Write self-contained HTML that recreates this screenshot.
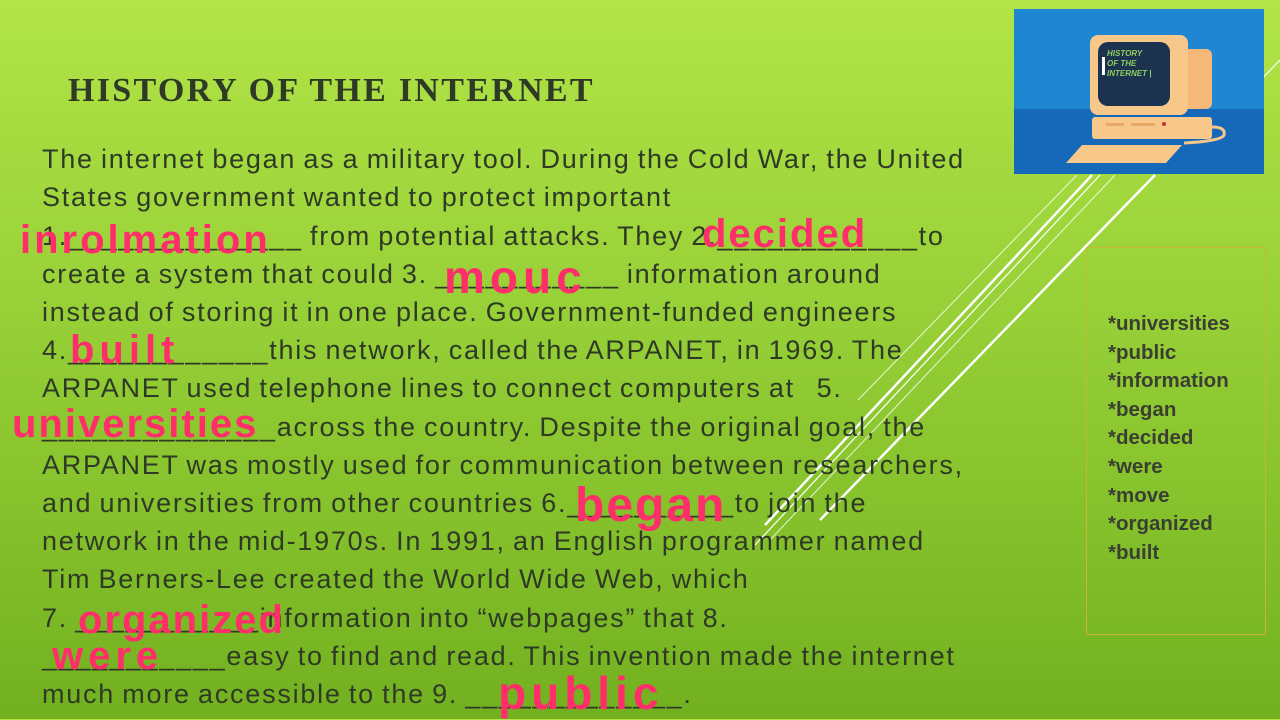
<!DOCTYPE html>
<html><head><meta charset="utf-8"><style>
*{margin:0;padding:0}
body{width:1280px;height:719px;overflow:hidden;position:relative;font-family:"Liberation Sans",sans-serif;
background:linear-gradient(180deg,#b2e446 0%,#9cd43a 35%,#86c22c 70%,#72b020 100%);}
.t{position:absolute;left:42px;font-size:27px;color:#2f3a26;white-space:nowrap;letter-spacing:1.75px;word-spacing:-2px}
.h{position:absolute;left:68px;top:72px;font-family:"Liberation Serif",serif;font-weight:bold;font-size:34px;color:#2f3a26;letter-spacing:2.3px}
.p{position:absolute;color:#ff2d6a;font-size:40px;font-family:"Liberation Sans",sans-serif;white-space:nowrap;letter-spacing:5px;font-weight:bold}
.box{position:absolute;left:1086px;top:247px;width:178px;height:386px;border:1px solid #c8b830}
.box div{font-weight:bold;color:#3a3f32;font-size:20.5px;line-height:28.6px;padding-left:21px}
</style></head><body>
<svg style="position:absolute;left:0;top:0" width="1280" height="719">
<g stroke="#fff" fill="none">
<line x1="1077" y1="175" x2="858" y2="400" stroke-width="1" opacity=".8"/>
<line x1="1092" y1="175" x2="765" y2="525" stroke-width="2.5"/>
<line x1="1100" y1="175" x2="755" y2="545" stroke-width="1.2"/>
<line x1="1115" y1="175" x2="770" y2="540" stroke-width="1" opacity=".8"/>
<line x1="1155" y1="175" x2="820" y2="520" stroke-width="2.5"/>
<line x1="1280" y1="60" x2="1230" y2="112" stroke-width="1.5" opacity=".8"/>
</g></svg>
<div style="position:absolute;left:1014px;top:9px;width:250px;height:165px;background:#1f86d2">
<div style="position:absolute;left:0;top:100px;width:250px;height:65px;background:#1569b8"></div>
<svg width="250" height="165" style="position:absolute;left:0;top:0">
<rect x="150" y="40" width="48" height="60" rx="6" fill="#f5b878"/>
<rect x="76" y="26" width="98" height="80" rx="8" fill="#f8c88a"/>
<rect x="84" y="33" width="72" height="64" rx="10" fill="#1c3350"/>
<rect x="88" y="48" width="3" height="18" fill="#fff"/>
<text x="93" y="47" font-size="8" font-style="italic" font-weight="bold" fill="#8fce5c" font-family="Liberation Sans">HISTORY</text>
<text x="93" y="57" font-size="8" font-style="italic" font-weight="bold" fill="#8fce5c" font-family="Liberation Sans">OF THE</text>
<text x="93" y="67" font-size="8" font-style="italic" font-weight="bold" fill="#8fce5c" font-family="Liberation Sans">INTERNET |</text>
<rect x="78" y="108" width="120" height="22" rx="3" fill="#f8c88a"/>
<rect x="92" y="114" width="18" height="3" fill="#e8a868"/><rect x="117" y="114" width="24" height="3" fill="#e8a868"/>
<circle cx="150" cy="115" r="2" fill="#d03030"/>
<path d="M198 118 Q212 118 210 126 Q208 132 170 134" stroke="#f8c88a" stroke-width="3" fill="none"/>
<polygon points="52,154 68,136 168,136 152,154" fill="#f8c88a"/>
</svg></div>
<div class="h">HISTORY OF THE INTERNET</div>
<div class="t" style="top:144px">The internet began as a military tool. During the Cold War, the United</div>
<div class="t" style="top:182px">States government wanted to protect important</div>
<div class="t" style="top:221px">1.______________ from potential attacks. They 2.____________to</div>
<div class="t" style="top:259px">create a system that could 3. ___________ information around</div>
<div class="t" style="top:297px">instead of storing it in one place. Government-funded engineers</div>
<div class="t" style="top:335px">4.____________this network, called the ARPANET, in 1969. The</div>
<div class="t" style="top:373px">ARPANET used telephone lines to connect computers at &nbsp;&nbsp;5.</div>
<div class="t" style="top:412px">______________across the country. Despite the original goal, the</div>
<div class="t" style="top:450px">ARPANET was mostly used for communication between researchers,</div>
<div class="t" style="top:488px">and universities from other countries 6.__________to join the</div>
<div class="t" style="top:526px">network in the mid-1970s. In 1991, an English programmer named</div>
<div class="t" style="top:564px">Tim Berners-Lee created the World Wide Web, which</div>
<div class="t" style="top:603px">7. ___________information into “webpages” that 8.</div>
<div class="t" style="top:641px">___________easy to find and read. This invention made the internet</div>
<div class="t" style="top:679px">much more accessible to the 9. _____________.</div>
<div class="p" style="left:20px;top:218px;letter-spacing:3px">inrolmation</div>
<div class="p" style="left:702px;top:212px;letter-spacing:2px">decided</div>
<div class="p" style="left:444px;top:250px;font-size:46px">mouc</div>
<div class="p" style="left:70px;top:328px">built</div>
<div class="p" style="left:12px;top:402px;letter-spacing:2px">universities</div>
<div class="p" style="left:575px;top:478px;font-size:48px;letter-spacing:2px">began</div>
<div class="p" style="left:78px;top:598px;letter-spacing:2px">organized</div>
<div class="p" style="left:52px;top:634px">were</div>
<div class="p" style="left:498px;top:666px;font-size:46px">public</div>
<div class="box"><div style="height:62px"></div>
<div>*universities</div><div>*public</div><div>*information</div><div>*began</div><div>*decided</div><div>*were</div><div>*move</div><div>*organized</div><div>*built</div></div>
</body></html>
